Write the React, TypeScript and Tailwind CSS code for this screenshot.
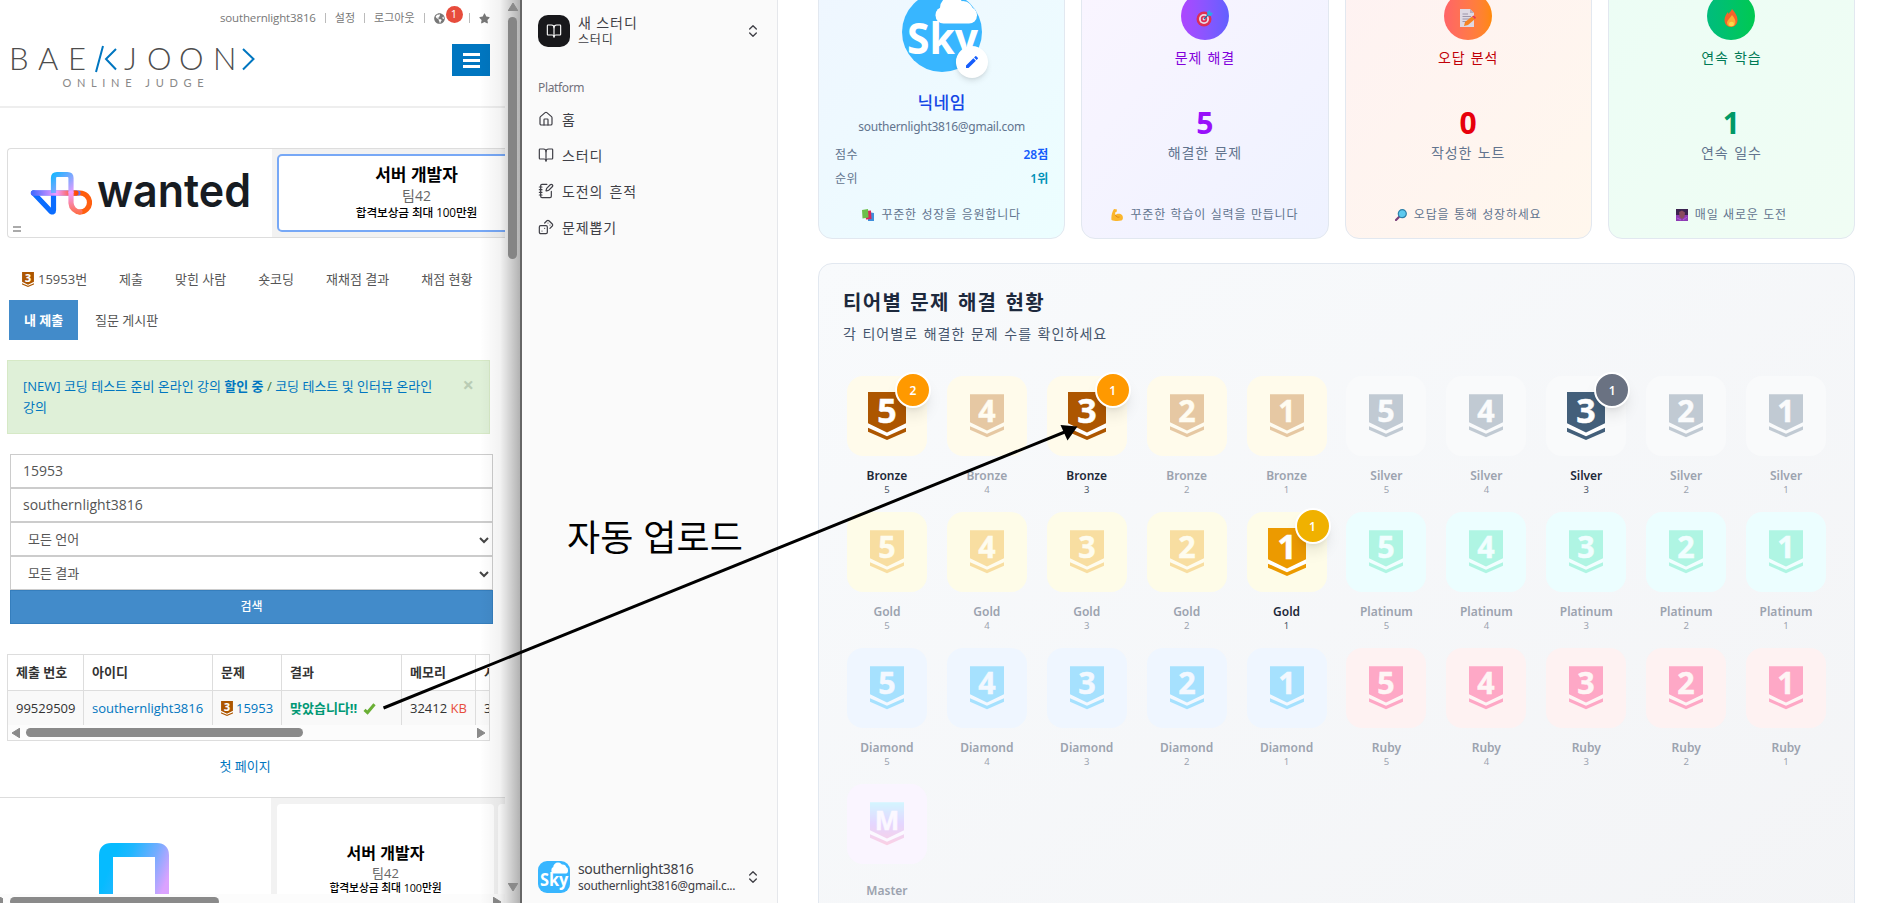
import type { ReactNode } from "react";
import { BookOpen, ChevronsUpDown, Dices, House, NotebookPen } from "lucide-react";
import { FaGlobeAmericas, FaStar } from "react-icons/fa";
import { MdEdit } from "react-icons/md";

const BOJ_FONT = "font-['Open_Sans','Noto_Sans_CJK_KR',sans-serif]";
const APP_FONT = "font-['Noto_Sans','Noto_Sans_CJK_KR',sans-serif]";

type TierName = "Bronze" | "Silver" | "Gold" | "Platinum" | "Diamond" | "Ruby" | "Master";

const TIERS: Record<TierName, { fill: string; tile: string; count: string }> = {
  Bronze: { fill: "#ad5600", tile: "bg-[#fffbeb]", count: "bg-[#ff9900]" },
  Silver: { fill: "#435f7a", tile: "bg-[#f9fafb]", count: "bg-[#6a7282]" },
  Gold: { fill: "#ec9a00", tile: "bg-[#fefce8]", count: "bg-[#f0b100]" },
  Platinum: { fill: "#27e2a4", tile: "bg-[#ecfeff]", count: "bg-cyan-500" },
  Diamond: { fill: "#00b4fc", tile: "bg-[#eff6ff]", count: "bg-blue-500" },
  Ruby: { fill: "#ff0062", tile: "bg-[#fef2f2]", count: "bg-red-500" },
  Master: { fill: "url(#masterFill)", tile: "bg-[#faf5ff]", count: "bg-purple-500" },
};

const ROWS: [TierName, TierName][] = [
  ["Bronze", "Silver"],
  ["Gold", "Platinum"],
  ["Diamond", "Ruby"],
];

const SOLVED: Record<string, number> = { Bronze5: 2, Bronze3: 1, Silver3: 1, Gold1: 1 };

function TierShape({ fill, label, className }: { fill: string; label: string; className: string }) {
  return (
    <svg viewBox="0 0 38 48" className={`overflow-visible ${className}`}>
      <defs>
        <linearGradient id="masterFill" x1="0" y1="0" x2="0" y2="48" gradientUnits="userSpaceOnUse">
          <stop offset="0" stopColor="#7cf9ff" />
          <stop offset="0.5" stopColor="#b491ff" />
          <stop offset="1" stopColor="#ff7ca8" />
        </linearGradient>
      </defs>
      <path d="M0 0H38V39.7L19 48L0 39.7Z" fill={fill} />
      <path d="M0 31.3L19 40.6L38 31.3V35.7L19 44.2L0 35.7Z" fill="#fff" />
      <text
        x="19"
        y="30.800"
        textAnchor="middle"
        fontSize={label === "M" ? 29 : 34}
        fontWeight="700"
        fill="#fff"
        stroke="#fff"
        strokeWidth="0.500"
        fontFamily="'Open Sans', sans-serif"
      >
        {label}
      </text>
    </svg>
  );
}

function Tier({ name, level }: { name: TierName; level?: number }) {
  const tier = TIERS[name];
  const count = SOLVED[`${name}${level}`];
  return (
    <div className="flex h-[136px] flex-col items-center">
      <div className={`relative flex size-20 items-center justify-center rounded-2xl ${tier.tile}`}>
        <TierShape
          fill={tier.fill}
          label={level ? String(level) : "M"}
          className={count ? "h-12 w-[38px]" : "h-[43.5px] w-[34px] opacity-30"}
        />
        {count && (
          <span
            className={`absolute -top-1 -right-1 flex size-9 items-center justify-center rounded-full border-2 border-white pt-px text-[12px] font-semibold text-white shadow-lg ${tier.count}`}
          >
            {count}
          </span>
        )}
      </div>
      <span
        className={`text-[12px] leading-4 font-semibold ${level ? "mt-3" : "mt-[19px]"} ${count ? "text-[#1e2939]" : "text-[#9ca3af]"}`}
      >
        {name}
      </span>
      {level && (
        <span className={`-mt-px text-[9.500px] leading-[14px] ${count ? "text-[#4a5565]" : "text-[#9ca3af]"}`}>{level}</span>
      )}
    </div>
  );
}

function Sky({ className }: { className: string }) {
  return (
    <svg viewBox="0 0 80 80" className={className}>
      <rect width="80" height="80" fill="#38b6ff" />
      <circle cx="50" cy="16" r="12" fill="#fff" />
      <circle cx="61" cy="19" r="10" fill="#fff" />
      <rect x="33.500" y="15" width="41.500" height="16.500" rx="8" fill="#fff" />
      <text x="5" y="62" fontSize="43" fontWeight="700" fill="#fff" textLength="71" lengthAdjust="spacingAndGlyphs" fontFamily="'Open Sans', sans-serif">
        Sky
      </text>
    </svg>
  );
}

function WantedMark({ className }: { className: string }) {
  return (
    <svg viewBox="0 0 62 44" fill="none" strokeWidth="5.2" strokeLinejoin="round" strokeLinecap="round" className={className}>
      <defs>
        <linearGradient id="wLoop" x1="40" y1="20" x2="60" y2="30" gradientUnits="userSpaceOnUse">
          <stop offset="0" stopColor="#ff5a00" />
          <stop offset="1" stopColor="#ff5f10" />
        </linearGradient>
        <linearGradient id="wBar" x1="3" y1="0" x2="46" y2="0" gradientUnits="userSpaceOnUse">
          <stop offset="0" stopColor="#4a6bff" />
          <stop offset="0.55" stopColor="#f29cff" />
          <stop offset="1" stopColor="#ff4a00" />
        </linearGradient>
        <linearGradient id="wArch" x1="22" y1="4" x2="42" y2="24" gradientUnits="userSpaceOnUse">
          <stop offset="0" stopColor="#18b5ff" />
          <stop offset="0.5" stopColor="#7ca8ff" />
          <stop offset="1" stopColor="#f29cff" />
        </linearGradient>
        <linearGradient id="wDrop" x1="0" y1="22" x2="0" y2="44" gradientUnits="userSpaceOnUse">
          <stop offset="0" stopColor="#f29cff" />
          <stop offset="1" stopColor="#ff6a3c" />
        </linearGradient>
      </defs>
      <path d="M41 22H50A9.500 9.500 0 0 1 50 41" stroke="url(#wLoop)" />
      <path d="M3.500 22L21 40.500Q23.500 42 23.500 39V22" stroke="#0a6cff" />
      <path d="M3.500 21.990L48 22.010" stroke="#5b74ff" />
      <path d="M3.500 21.900L46 22.100" stroke="url(#wBar)" />
      <path d="M23.500 22V7Q23.500 3.500 27 3.500H37.500Q41 3.500 41 7V22" stroke="url(#wArch)" strokeLinecap="butt" />
      <path d="M41 22V32A9.500 9.500 0 0 0 50 41" stroke="url(#wDrop)" />
    </svg>
  );
}

function BojHeader() {
  const sep = <i className="mx-[9px] h-[10px] w-px bg-[#bbb]" />;
  return (
    <header className="h-[108px] w-[505px] shrink-0 border-b-2 border-[#eee]">
      <div className="flex h-9 items-center justify-end pr-[15px] text-[11.500px] text-[#777]">
        <span className="tracking-[-0.150px]">southernlight3816</span>
        {sep}
        <span className="text-[11px]">설정</span>
        {sep}
        <span className="text-[11px]">로그아웃</span>
        {sep}
        <FaGlobeAmericas className="size-[11px]" />
        <span className="-mt-2 ml-[1px] flex size-[17px] items-center justify-center rounded-full bg-[#e74c3c] text-[11px] text-white">1</span>
        <i className="mr-[9px] ml-[6.500px] h-[10px] w-px bg-[#bbb]" />
        <FaStar className="size-[11px]" />
      </div>
      <div className="flex justify-between pr-[15px] pl-2">
        <svg viewBox="0 0 250 50" className="mt-[5px] h-[50px] w-[250px] overflow-visible" fontFamily="Lato, sans-serif" fontWeight="300" fill="#4d4d4d">
          <text y="28.500" fontSize="31">
            <tspan x="1">B</tspan>
            <tspan x="30">A</tspan>
            <tspan x="60">E</tspan>
            <tspan x="116">J</tspan>
            <tspan x="139">O</tspan>
            <tspan x="171">O</tspan>
            <tspan x="205">N</tspan>
          </text>
          <path d="M95 5L88 31M108 8L98 18L108 28.500M235 8L245.500 18L235 28.500" stroke="#0076c0" strokeWidth="2" fill="none" />
          <text x="54.500" y="45.500" fontSize="11" fontWeight="400" fill="#888" textLength="141">ONLINE JUDGE</text>
        </svg>
        <button className="mt-2 flex h-8 w-[38px] flex-col items-center justify-center gap-[3px] bg-[#0076c0]">
          <i className="h-[3px] w-[17px] bg-white" />
          <i className="h-[3px] w-[17px] bg-white" />
          <i className="h-[3px] w-[17px] bg-white" />
        </button>
      </div>
    </header>
  );
}

function Tab({ children, className = "" }: { children: ReactNode; className?: string }) {
  return <span className={`flex h-10 items-center px-[15px] pt-px whitespace-nowrap ${className}`}>{children}</span>;
}

function Field({ children, select = false }: { children: ReactNode; select?: boolean }) {
  return (
    <div className={`flex h-[34px] items-center justify-between border border-[#ccc] bg-white pr-[3px] text-[#555] ${select ? "pt-px pl-[17px] text-[13px]" : "pb-px pl-3 text-[14px]"}`}>
      <span>{children}</span>
      {select && (
        <svg viewBox="0 0 10 8" className="h-2 w-[10px]" fill="none" stroke="#444" strokeWidth="2">
          <path d="M1 2L5 6L9 2" />
        </svg>
      )}
    </div>
  );
}

function Triangle({ dir }: { dir: "left" | "right" | "up" | "down" }) {
  const d = { left: "M8 0V10L0 5Z", right: "M0 0V10L8 5Z", up: "M0 8H10L5 0Z", down: "M0 0H10L5 8Z" }[dir];
  const tall = dir === "left" || dir === "right";
  return (
    <svg viewBox={tall ? "0 0 8 10" : "0 0 10 8"} className={tall ? "h-[10px] w-2" : "h-2 w-[10px]"} fill="#8a8a8a" stroke="#8a8a8a" strokeLinejoin="round">
      <path d={d} />
    </svg>
  );
}

function Cell({ children, head = false }: { children: ReactNode; head?: boolean }) {
  return (
    <div className={`flex items-center overflow-hidden border-r border-[#ddd] pl-2 whitespace-nowrap ${head ? "font-bold" : "border-t bg-[#f9f9f9] pt-px"}`}>
      {children}
    </div>
  );
}

function BojWindow() {
  return (
    <section className={`relative flex h-[903px] w-[520px] shrink-0 flex-col overflow-hidden bg-white text-[13px] text-[#555] ${BOJ_FONT}`}>
      <BojHeader />

      <div className="mt-10 ml-[7px] flex h-[90px] w-[498px] shrink-0 rounded-l-[4px] border border-r-0 border-[#ddd]">
        <div className="flex w-[264px] flex-col">
          <div className="mt-[22px] flex pl-[22px]">
            <WantedMark className="h-[44px] w-[62px]" />
            <svg viewBox="0 0 156 44" className="ml-1 h-[44px] w-[156px] overflow-visible">
              <text x="1" y="36" fontSize="46" fontWeight="600" fill="#171c22" textLength="154" lengthAdjust="spacingAndGlyphs" fontFamily="Inter, sans-serif">
                wanted
              </text>
            </svg>
          </div>
          <div className="mt-[11px] ml-[5px] flex w-2 flex-col gap-[2px]">
            <i className="h-[2px] bg-[#aaa]" />
            <i className="h-[2px] bg-[#aaa]" />
          </div>
        </div>
        <div className="flex flex-1 overflow-hidden bg-[#f2f2f2] pt-[5px] pl-[5px]">
          <div className="flex h-[78px] w-[279px] shrink-0 flex-col items-center rounded-[5px] border-2 border-[#77a8f6] bg-white pt-[8px]">
            <b className="text-[17px] leading-[22px] text-black">서버 개발자</b>
            <span className="text-[14px] leading-[20px] text-[#666]">팀42</span>
            <span className="text-[11.700px] leading-[12px] font-medium tracking-[-0.100px] text-black">합격보상금 최대 100만원</span>
          </div>
        </div>
      </div>

      <nav className="mt-[21px] flex shrink-0 flex-wrap gap-y-px pl-[7px]">
        <div className="flex h-10 w-full">
          <Tab className="w-[94px] gap-1">
            <TierShape fill="#ad5600" label="3" className="h-[15px] w-3 shrink-0" />
            <span>15953번</span>
          </Tab>
          <Tab className="ml-[3px]">제출</Tab>
          <Tab className="ml-[2px]">맞힌 사람</Tab>
          <Tab className="ml-[2px]">숏코딩</Tab>
          <Tab className="ml-[2px]">재채점 결과</Tab>
          <Tab className="ml-[2px]">채점 현황</Tab>
        </div>
        <Tab className="ml-[2px] w-[69px] bg-[#428bca] font-semibold text-white">내 제출</Tab>
        <Tab className="ml-[2px]">질문 게시판</Tab>
      </nav>

      <div className="mt-5 ml-[7px] flex h-[74px] w-[483px] shrink-0 justify-between border border-[#d6e9c6] bg-[#dff0d8] pt-[15px] pr-[15px] pl-[15px] leading-[21px] text-[#0076c0]">
        <p className="w-[420px]">
          [NEW] 코딩 테스트 준비 온라인 강의 <b>할인 중</b> <span className="text-[#3c763d]">/</span> 코딩 테스트 및 인터뷰 온라인
          <br />
          강의
        </p>
        <span className="text-[20px] leading-[18px] font-bold text-[#b9ccb4]">×</span>
      </div>

      <form className="mt-5 ml-[10px] w-[483px] shrink-0">
        <Field>15953</Field>
        <Field>southernlight3816</Field>
        <Field select>모든 언어</Field>
        <Field select>모든 결과</Field>
        <div className="flex h-[34px] items-center justify-center border border-[#357ebd] bg-[#428bca] text-[12px] font-medium text-white">검색</div>
      </form>

      <div className="mt-[30px] ml-[7px] h-[87px] w-[483px] shrink-0 overflow-hidden border border-[#ddd] text-[#333]">
        <div className="grid w-[560px] grid-cols-[76px_129px_69px_120px_74px_92px] grid-rows-[35px_35px]">
          <Cell head>제출 번호</Cell>
          <Cell head>아이디</Cell>
          <Cell head>문제</Cell>
          <Cell head>결과</Cell>
          <Cell head>메모리</Cell>
          <Cell head>시간</Cell>
          <Cell>99529509</Cell>
          <Cell><span className="text-[#0076c0]">southernlight3816</span></Cell>
          <Cell>
            <TierShape fill="#ad5600" label="3" className="mr-[3px] h-[15px] w-3 shrink-0" />
            <span className="text-[#0076c0]">15953</span>
          </Cell>
          <Cell>
            <b className="text-[#009874]">맞았습니다!!</b>
            <svg viewBox="0 0 13 12" className="ml-[6px] h-3 w-[13px]" fill="none" stroke="#6aaf35" strokeWidth="3">
              <path d="M1.500 6.800L4.500 9.500L11.500 1.200" />
            </svg>
          </Cell>
          <Cell>32412&nbsp;<span className="text-[#e74c3c]">KB</span></Cell>
          <Cell>32 ms</Cell>
        </div>
        <div className="flex h-[15px] items-center bg-[#fcfcfc] pl-1">
          <Triangle dir="left" />
          <i className="ml-1.5 h-[9px] w-[277px] rounded-full bg-[#8a8a8a]" />
          <i className="w-[174px]" />
          <Triangle dir="right" />
        </div>
      </div>

      <a className="mt-[14px] w-[490px] shrink-0 text-center leading-[22px] text-[#0076c0]">첫 페이지</a>

      <div className="mt-5 flex h-[97px] w-[505px] shrink-0 overflow-hidden border-t border-[#ddd]">
        <div className="w-[271px] pt-[45px] pl-[99px]">
          <svg viewBox="0 0 70 52" className="h-[52px] w-[70px]" fill="none" strokeWidth="14">
            <defs>
              <linearGradient id="arch" x1="8" y1="30" x2="62" y2="52" gradientUnits="userSpaceOnUse">
                <stop offset="0" stopColor="#06bbff" />
                <stop offset="0.25" stopColor="#20b7ff" />
                <stop offset="0.65" stopColor="#74acff" />
                <stop offset="1" stopColor="#dba2ff" />
              </linearGradient>
            </defs>
            <path d="M7 52V12Q7 7 12 7H58Q63 7 63 12V52" stroke="url(#arch)" />
          </svg>
        </div>
        <div className="flex flex-1 gap-1 overflow-hidden bg-[#f2f2f2] pt-1.5 pl-1.5">
          <div className="flex h-[110px] w-[217px] shrink-0 flex-col items-center rounded-[4px] bg-white pt-[38px]">
            <b className="text-[16px] leading-[22px] text-black">서버 개발자</b>
            <span className="text-[13px] leading-[18px] text-[#666]">팀42</span>
            <span className="text-[10.800px] leading-[12px] font-medium tracking-[-0.100px] text-black">합격보상금 최대 100만원</span>
          </div>
          <div className="h-[110px] w-5 shrink-0 rounded-[4px] bg-white" />
        </div>
      </div>
      <div className="flex h-[15px] w-[505px] shrink-0 items-center bg-[#fcfcfc]">
        <i className="w-[3px] overflow-hidden"><Triangle dir="right" /></i>
        <i className="ml-[7px] h-[9px] w-[209px] rounded-full bg-[#8a8a8a]" />
        <i className="w-[274px]" />
        <Triangle dir="right" />
      </div>

      <div className="absolute inset-y-0 right-0 w-10 bg-gradient-to-r from-transparent via-black/5 to-black/30" />
      <div className="absolute inset-y-0 right-[2px] flex w-[11px] flex-col items-center pt-[3px] pb-[12px]">
        <Triangle dir="up" />
        <i className="mt-1.5 h-[242px] w-[9px] rounded-full bg-[#858585]" />
        <i className="flex-1" />
        <Triangle dir="down" />
      </div>
    </section>
  );
}

function Sidebar() {
  const items = [
    { icon: House, text: "홈" },
    { icon: BookOpen, text: "스터디" },
    { icon: NotebookPen, text: "도전의 흔적" },
    { icon: Dices, text: "문제뽑기" },
  ];
  return (
    <aside className="flex h-[903px] w-[258px] shrink-0 flex-col border-r border-l-2 border-r-[#e5e7eb] border-l-[#666] bg-[#fafafa] px-4 text-[14px] text-[#3f3f46]">
      <div className="mt-[15px] flex h-8 items-center">
        <span className="flex size-8 items-center justify-center rounded-[10px] bg-[#18181b] text-white">
          <BookOpen className="size-4" strokeWidth={1.7} />
        </span>
        <div className="ml-2 flex w-[167px] flex-col">
          <span className="leading-[17px] tracking-[0.9px]">새 스터디</span>
          <span className="text-[12px] leading-[18px] tracking-[0.8px]">스터디</span>
        </div>
        <ChevronsUpDown className="size-4 shrink-0" />
      </div>
      <div className="mt-8 text-[12px] leading-[18px] tracking-[-0.350px] text-[#71717a]">Platform</div>
      <nav className="mt-1">
        {items.map(({ icon: Icon, text }) => (
          <div key={text} className="flex h-9 items-center gap-2 tracking-[0.900px] [word-spacing:1.500px]">
            <Icon className="size-4" strokeWidth={1.8} />
            <span>{text}</span>
          </div>
        ))}
      </nav>
      <div className="mt-auto mb-[10px] flex h-8 items-center">
        <Sky className="size-8 shrink-0 rounded-[9px]" />
        <div className="ml-2 flex w-[167px] flex-col whitespace-nowrap">
          <span className="leading-[18px] tracking-[-0.350px]">southernlight3816</span>
          <span className="text-[12px] leading-4 tracking-[-0.280px]">southernlight3816@gmail.c...</span>
        </div>
        <ChevronsUpDown className="size-4 shrink-0" />
      </div>
    </aside>
  );
}

const TargetArt = () => (
  <svg viewBox="0 0 18 18" className="size-[18px]">
    <circle cx="8" cy="10" r="7.5" fill="#dd2e55" />
    <circle cx="8" cy="10" r="5" fill="#e8dbe6" />
    <circle cx="8" cy="10" r="3.2" fill="#dd2e55" />
    <circle cx="8" cy="10" r="1.4" fill="#e8dbe6" />
    <path d="M8 10L13 5" stroke="#176fa8" strokeWidth="1.3" />
    <path d="M11 3L14 1L14.500 3.500L17 4L15 7L11.500 6.500Z" fill="#2ba8e8" />
  </svg>
);
const MemoArt = () => (
  <svg viewBox="0 0 18 18" className="size-[18px]">
    <path d="M1 0H11L15 4V18H1Z" fill="#ded9e3" />
    <path d="M11 0V4H15Z" fill="#b7aec2" />
    <path d="M3.500 5H9M3.500 7.500H12M3.500 10H11M3.500 12.500H8" stroke="#9d96aa" />
    <path d="M5 17L6 13L13 7.500L16 10L9 16Z" fill="#f58220" />
    <path d="M13 7.500L14.500 6.500L17 8.500L16 10Z" fill="#e8384f" />
  </svg>
);
const FireArt = () => (
  <svg viewBox="0 0 18 18" className="size-[18px]">
    <path d="M10 0C13 3 15.500 7 15.500 11C15.500 15 13 18 9 18S2.500 15 2.500 11C2.500 8 4 5 6 3L6.500 5C7.500 3.500 9 2 10 0Z" fill="#f4622a" />
    <path d="M10 6C12.500 9 13.500 11 13.500 13C13.500 16 11.500 17.500 9 17.500S5 16 5 13.500C5 11.500 8 9 10 6Z" fill="#fcae32" />
    <ellipse cx="9.500" cy="15" rx="2.500" ry="2.300" fill="#ffd94a" />
  </svg>
);
const BooksArt = () => (
  <svg viewBox="0 0 12 12" className="size-3">
    <path d="M6 3L12 4V12H6Z" fill="#3f8fdc" />
    <path d="M3 2L9 1.500L9.500 10L4 10.500Z" fill="#d9275c" />
    <path d="M0 1L6 0L6.500 8.500L0.500 9.500Z" fill="#6cc04a" />
  </svg>
);
const MuscleArt = () => (
  <svg viewBox="0 0 12 12" className="size-3">
    <path d="M3 0L6 0.500L5.500 3L4 3.500L4.500 6C6 4.500 9 4 11 6C12.500 8 12 11 10.500 11.500C7 12.300 3 12 0.500 11C0 7 1 3 3 0Z" fill="#fbb62c" />
    <path d="M4.500 6C5 8 7 8.500 8.500 8" stroke="#dd8613" fill="none" />
  </svg>
);
const LensArt = () => (
  <svg viewBox="0 0 12 12" className="size-3">
    <path d="M4.500 7.500L1 11" stroke="#7a3f78" strokeWidth="2.200" strokeLinecap="round" />
    <circle cx="7.300" cy="4.700" r="4" fill="#5cc9ee" stroke="#2c7fa8" strokeWidth="1.200" />
  </svg>
);
const NightArt = () => (
  <svg viewBox="0 0 12 12" className="size-3">
    <rect width="12" height="12" fill="#3c2350" />
    <rect y="6" width="12" height="6" fill="#8e3bb4" />
    <path d="M3 3L6 1.500L9 3.500L8.500 8L6 10L3.500 8Z" fill="#8a4a5e" />
    <path d="M1 9L5 11M11 8L7 11" stroke="#b45ad8" />
  </svg>
);

function Card({ tone, children, foot, art }: { tone: string; children: ReactNode; foot: string; art: ReactNode }) {
  return (
    <article className={`flex h-[270px] flex-1 flex-col items-center rounded-[14px] border border-[#e2e8f0] bg-gradient-to-br pt-[22px] ${tone}`}>
      {children}
      <footer className="mt-auto mb-[14px] flex h-[18px] items-center gap-[7px] text-[12px] tracking-[0.800px] whitespace-nowrap text-[#62748e] [word-spacing:0.700px]">
        {art}
        <span>{foot}</span>
      </footer>
    </article>
  );
}

function StatCard(p: { tone: string; circle: string; icon: ReactNode; title: string; titleTone: string; value: number; valueTone: string; label: string; foot: string; art: ReactNode }) {
  return (
    <Card tone={p.tone} foot={p.foot} art={p.art}>
      <span className={`flex size-12 shrink-0 items-center justify-center rounded-full bg-gradient-to-r pt-1 ${p.circle}`}>{p.icon}</span>
      <span className={`mt-[8px] text-[14px] leading-5 tracking-[0.800px] [word-spacing:1px] ${p.titleTone}`}>{p.title}</span>
      <b className={`mt-[37px] text-[30px] leading-9 ${p.valueTone}`}>{p.value}</b>
      <span className="mt-[2px] text-[14px] leading-5 tracking-[0.900px] text-[#62748e] [word-spacing:1px]">{p.label}</span>
    </Card>
  );
}

function Dashboard() {
  return (
    <main className="flex flex-1 flex-col overflow-hidden bg-white pr-[33px] pl-10">
      <div className="-mt-[31px] flex gap-4">
        <Card tone="from-[#eff6ff] to-[#ecfeff]" foot="꾸준한 성장을 응원합니다" art={<BooksArt />}>
          <div className="relative size-20 shrink-0">
            <Sky className="size-20 rounded-full" />
            <span className="absolute -right-[6px] -bottom-[6px] flex size-8 items-center justify-center rounded-full bg-white text-[#155dfc] shadow-md">
              <MdEdit className="size-4" />
            </span>
          </div>
          <span className="mt-[19px] text-[17px] leading-6 font-medium tracking-[0.4px] text-[#1447e6]">닉네임</span>
          <span className="mt-[3px] text-[12px] leading-[18px] tracking-[-0.270px] text-[#62748e]">southernlight3816@gmail.com</span>
          <dl className="mt-[7px] w-full px-4 text-[12px] leading-6">
            <div className="flex justify-between">
              <dt className="tracking-[0.400px] text-[#62748e]">점수</dt>
              <dd className="font-semibold text-[#155dfc]">28점</dd>
            </div>
            <div className="flex justify-between">
              <dt className="tracking-[0.400px] text-[#62748e]">순위</dt>
              <dd className="font-semibold text-[#0092b8]">1위</dd>
            </div>
          </dl>
        </Card>
        <StatCard tone="from-[#faf5ff] to-[#eef2ff]" circle="from-[#ad46ff] to-[#615fff]" icon={<TargetArt />} title="문제 해결" titleTone="text-[#8200db]" value={5} valueTone="text-[#9810fa]" label="해결한 문제" foot="꾸준한 학습이 실력을 만듭니다" art={<MuscleArt />} />
        <StatCard tone="from-[#fef2f2] to-[#fff7ed]" circle="from-[#ff6467] to-[#ff8904]" icon={<MemoArt />} title="오답 분석" titleTone="text-[#c10007]" value={0} valueTone="text-[#e7000b]" label="작성한 노트" foot="오답을 통해 성장하세요" art={<LensArt />} />
        <StatCard tone="from-[#ecfdf5] to-[#f0fdf4]" circle="from-[#00bc7d] to-[#00c950]" icon={<FireArt />} title="연속 학습" titleTone="text-[#007a55]" value={1} valueTone="text-[#009966]" label="연속 일수" foot="매일 새로운 도전" art={<NightArt />} />
      </div>

      <section className="mt-6 h-[720px] shrink-0 rounded-[14px] border border-[#e2e8f0] bg-gradient-to-br from-[#f8fafc] to-[#f3f4f6] px-6 pt-[25px]">
        <h2 className="text-[20px] leading-7 font-bold tracking-[1.300px] text-[#1d293d] [word-spacing:1.700px]">티어별 문제 해결 현황</h2>
        <p className="mt-[7px] text-[14px] leading-5 tracking-[1.050px] text-[#45556c] [word-spacing:0.800px]">각 티어별로 해결한 문제 수를 확인하세요</p>
        <div className="mt-8 grid grid-cols-10 gap-x-3">
          {ROWS.flatMap((pair) =>
            pair.flatMap((name) => [5, 4, 3, 2, 1].map((level) => <Tier key={`${name}${level}`} name={name} level={level} />)),
          )}
          <Tier name="Master" />
        </div>
      </section>
    </main>
  );
}

export default function App() {
  return (
    <div className={`relative flex h-[903px] w-[1888px] overflow-hidden bg-white ${APP_FONT}`}>
      <BojWindow />
      <Sidebar />
      <Dashboard />
      <svg viewBox="0 0 1888 903" className="pointer-events-none absolute inset-0 h-[903px] w-[1888px]">
        <path d="M383.500 708L1066 431.500" stroke="#000" strokeWidth="3" />
        <path d="M1077.500 426.500L1060.500 425L1067.500 440.500Z" fill="#000" />
      </svg>
      <span className="absolute top-[512px] left-[567px] text-[36px] leading-[52px] tracking-[0.200px] whitespace-nowrap text-black">자동 업로드</span>
    </div>
  );
}
